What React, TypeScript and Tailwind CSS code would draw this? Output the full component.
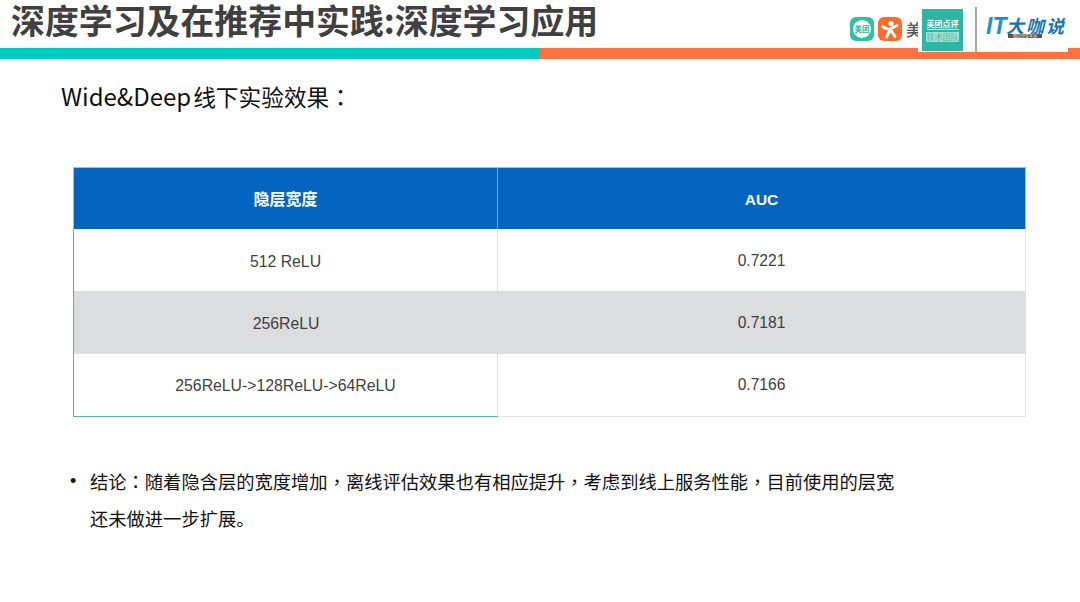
import React from 'react';

const rows = [
  { width: '512 ReLU', auc: '0.7221', shaded: false },
  { width: '256ReLU', auc: '0.7181', shaded: true },
  { width: '256ReLU->128ReLU->64ReLU', auc: '0.7166', shaded: false },
];

const cjk = "font-['Noto_Sans_CJK_SC','Noto_Sans',sans-serif]";

// the TC face centres these marks in their box, as the slide does
const Mark: React.FC<{ children: React.ReactNode }> = ({ children }) => (
  <span className="font-['Noto_Sans_CJK_TC',sans-serif]">{children}</span>
);

const LogoStrip: React.FC = () => (
  <div className="absolute right-[12px] top-0 flex h-[52px] w-[150px] items-start bg-white">
    <div className="ml-[4px] mt-[9px] flex h-[42px] w-[41px] flex-col items-center bg-[#2bb7a3] pt-[9px]">
      <span className={`${cjk} text-[8px] leading-[11px] font-bold text-white whitespace-nowrap`}>美团点评</span>
      <span className="mb-[2px] h-px w-[32px] bg-white/70" />
      <span className={`${cjk} w-[33px] bg-[#a3dfd5] text-center text-[8px] leading-[10px] text-[#55b9aa] whitespace-nowrap`}>技术团队</span>
    </div>
    <div className="ml-[12px] mt-[7px] h-[45px] w-[2px] bg-[#a9a9a9]" />
    <div className="ml-[9px] mt-[16px] flex items-start">
      <span className="w-[20px] text-[23px] leading-[21px] font-bold italic text-[#1b8ed6] font-['Liberation_Sans',sans-serif]">IT</span>
      <div className="flex flex-col">
        <span className={`${cjk} h-[18px] text-[18px] leading-[18px] font-bold italic tracking-[2px] text-[#1a74b8] whitespace-nowrap`}>大咖说</span>
        <span className={`${cjk} ml-[2px] h-[4px] w-[34px] overflow-hidden bg-[#555555] text-center text-[4px] leading-[4px] text-white whitespace-nowrap`}>知识分享平台</span>
      </div>
    </div>
  </div>
);

const App: React.FC = () => {
  return (
    <div className="relative h-[602px] w-[1080px] overflow-hidden bg-white font-['Liberation_Sans','Noto_Sans_CJK_SC',sans-serif]">
      <header className="relative">
        <div className="h-[48px] pl-[11px]">
          <h1 className={`${cjk} text-[33.9px] leading-[40px] font-bold whitespace-nowrap text-[#404040]`}>
            深度学习及在推荐中实践:深度学习应用
          </h1>
        </div>
        <div className="flex h-[11px]">
          <div className="w-[540px] bg-[#00cbc1]" />
          <div className="flex-1 bg-[#ff7140]" />
        </div>

        {/* logos */}
        <div className="absolute left-[850px] top-[17px] flex items-center gap-[4px]">
          <div className={`${cjk} flex h-[24px] w-[24px] items-center justify-center rounded-[6px] bg-[#2bc4a0]`}>
            <span className="flex h-[18px] w-[18px] items-center justify-center rounded-full bg-white text-[7.5px] leading-none font-bold whitespace-nowrap text-[#2bb79a]">美团</span>
          </div>
          <div className="flex h-[24px] w-[24px] items-center justify-center rounded-[6px] bg-[#ff6b2c]">
            <svg width="20" height="20" viewBox="0 0 20 20" fill="none">
              <circle cx="11" cy="4.5" r="2.6" fill="white" />
              <path d="M2.5 7.5 C6 10 9 10.5 11 9.5 L17 6.5 M10.5 10 L6.5 18 M10.5 10.5 L15 17.5" stroke="white" strokeWidth="2.8" strokeLinecap="round" />
            </svg>
          </div>
          <span className={`${cjk} w-[14px] overflow-hidden text-[16px] leading-[24px] font-medium whitespace-nowrap text-[#555555]`}>美</span>
        </div>
        <LogoStrip />
      </header>

      <p className={`${cjk} mt-[19px] pl-[61px] text-[24px] leading-[36px] whitespace-nowrap text-[#111111]`}>
        Wide&amp;Deep<span className="ml-[2px] text-[22.7px]">线下实验效果<Mark>：</Mark></span>
      </p>

      <div className="mt-[52px] ml-[73px] w-[953px]">
        <div className="grid grid-cols-[424px_1fr] border-t border-l border-r border-[#8fc3e6]">
          <div className="flex h-[61px] items-center justify-center border-r border-[#6ea8dc] bg-[#0465c1] pb-[1px]">
            <span className={`${cjk} text-[16px] font-bold text-white`}>隐层宽度</span>
          </div>
          <div className="flex h-[61px] items-center justify-center bg-[#0465c1] pt-[2px]">
            <span className="text-[15.5px] font-bold text-white">AUC</span>
          </div>
        </div>
        <div className="border-r border-[#dfe3e6]">
          {rows.map((row, i) => (
            <div
              key={row.auc}
              className={`grid grid-cols-[425px_1fr] ${i === 1 ? 'h-[63px]' : 'h-[62px]'} ${row.shaded ? 'bg-[#dcddde]' : 'bg-white'}`}
            >
              <div className={`flex items-center justify-center border-l border-[#5aa8e0] ${i === 2 ? 'pt-[1px]' : 'pt-[3px]'} ${row.shaded ? '' : 'border-r border-r-[#d8dde2]'}`}>
                <span className="text-[15.8px] text-[#3f3f3f] whitespace-nowrap">{row.width}</span>
              </div>
              <div className={`flex items-center justify-center ${i === 2 ? '' : 'pt-[1px]'}`}>
                <span className="text-[15.6px] text-[#3f3f3f]">{row.auc}</span>
              </div>
            </div>
          ))}
        </div>
        <div className="grid h-[1px] grid-cols-[425px_1fr]">
          <div className="bg-[#5aa8e0]" />
          <div className="bg-[#dfe3e6]" />
        </div>
      </div>

      <div className={`${cjk} mt-[46px] ml-[71px] flex text-[18.3px] leading-[37px] text-[#111111]`}>
        <span className="w-[20px] shrink-0 font-['Liberation_Sans',sans-serif] text-[18px] -translate-x-px">•</span>
        <p className="-ml-px w-[810px]">
          结论<Mark>：</Mark>随着隐含层的宽度增加<Mark>，</Mark>离线评估效果也有相应提升<Mark>，</Mark>考虑到线上服务性能<Mark>，</Mark>目前使用的层宽还未做进一步扩展。
        </p>
      </div>
    </div>
  );
};

export default App;
